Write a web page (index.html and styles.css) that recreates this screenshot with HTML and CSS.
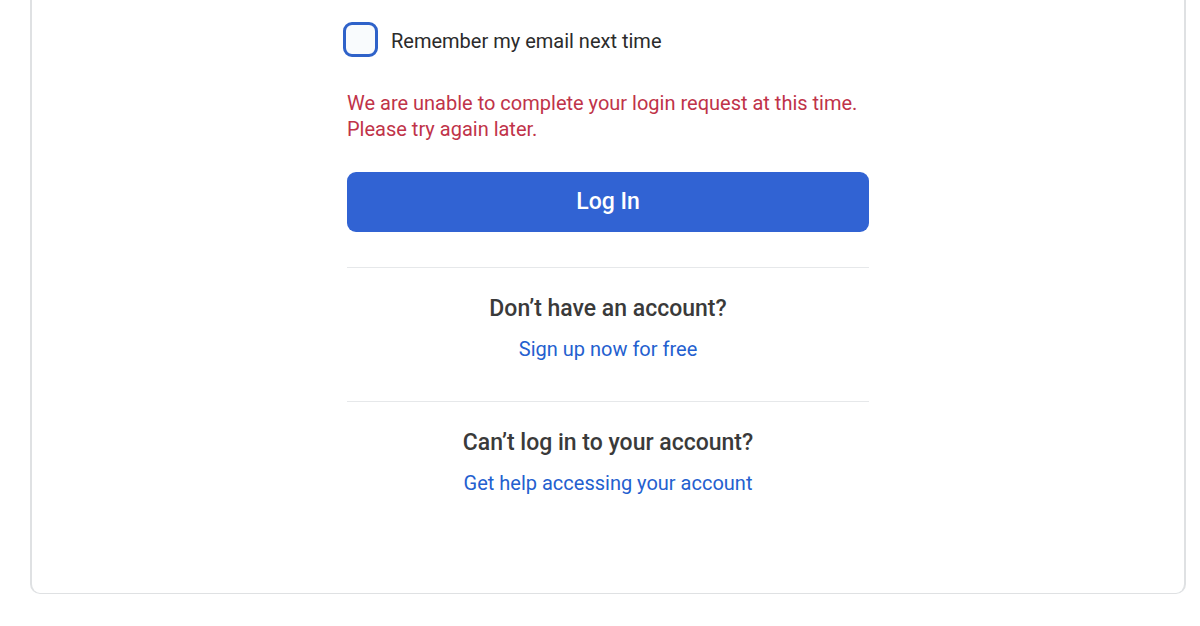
FILE: index.html
```html
<!DOCTYPE html>
<html lang="en">
<head>
<meta charset="utf-8">
<title>Log In</title>
<link rel="stylesheet" href="styles.css">
</head>
<body>
<main class="card">
  <div class="panel">
    <form class="login">
      <label class="remember" for="remember">
        <input class="checkbox" type="checkbox" id="remember" name="remember">
        <span class="remember-text">Remember my email next time</span>
      </label>
      <p class="error" role="alert">We are unable to complete your login request at this time. Please try again later.</p>
      <button class="submit" type="submit">Log In</button>
    </form>
    <section class="option">
      <h2 class="question">Don’t have an account?</h2>
      <a class="link" href="#">Sign up now for free</a>
    </section>
    <section class="option">
      <h2 class="question">Can’t log in to your account?</h2>
      <a class="link" href="#">Get help accessing your account</a>
    </section>
  </div>
</main>
</body>
</html>
```
FILE: styles.css
```css
* {
  box-sizing: border-box;
}

body {
  margin: 0;
  padding: 0 14px 32px 30px;
  background: #fff;
  color: #2b2b2b;
  font-family: Roboto, "Liberation Sans", sans-serif;
  font-size: 20px;
  line-height: 26px;
}

.card {
  padding: 22px 24px 93px;
  border: 2px solid #dfe1e3;
  border-top: 0;
  border-bottom-width: 1px;
  border-radius: 0 0 10px 10px;
}

.panel {
  max-width: 522px;
  margin: 0 auto;
}

.remember {
  display: flex;
  align-items: center;
  gap: 13px;
  margin-left: -4px;
}

.remember-text {
  padding-top: 2px;
}

.checkbox {
  appearance: none;
  flex: none;
  width: 35px;
  height: 35px;
  margin: 0;
  border: 3px solid #2f62c9;
  border-radius: 9px;
  background: #f9fbfd;
}

.checkbox:checked {
  background: #2f62c9;
}

.error {
  margin: 33px 0 30px;
  color: #c03349;
}

.submit {
  display: block;
  width: 100%;
  padding: 15px;
  border: 0;
  border-radius: 9px;
  background: #3163d3;
  color: #fff;
  font: 500 23px/30px Roboto, "Liberation Sans", sans-serif;
  cursor: pointer;
}

.option {
  margin-top: 35px;
  padding: 25px 0 4px;
  border-top: 1px solid #e6e8ea;
  text-align: center;
}

.question {
  margin: 0 0 11px;
  color: #3a3a3a;
  font-size: 23px;
  font-weight: 500;
  line-height: 32px;
}

.link {
  display: block;
  color: #2460cf;
  text-decoration: none;
}
```
